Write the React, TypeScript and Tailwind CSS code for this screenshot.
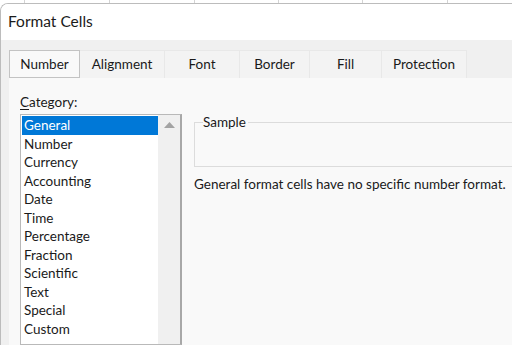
const tabs = [
  { label: "Number", w: "w-[71px]", active: true },
  { label: "Alignment", w: "w-[85px]" },
  { label: "Font", w: "w-[75px]" },
  { label: "Border", w: "w-[70px]" },
  { label: "Fill", w: "w-[72px]" },
  { label: "Protection", w: "w-[85px]" },
];

const categories = [
  "General",
  "Number",
  "Currency",
  "Accounting",
  "Date",
  "Time",
  "Percentage",
  "Fraction",
  "Scientific",
  "Text",
  "Special",
  "Custom",
];

export default function App() {
  return (
    <div
      className="w-[512px] h-[345px] overflow-hidden bg-white flex flex-col text-[#1a1a1a]"
      style={{ fontFamily: '"Segoe UI", Lato, sans-serif' }}
    >
      {/* sheet grid peeking above the dialog */}
      <div className="h-[3px] flex shrink-0">
        <div className="w-[25px] border-r border-[#d4d4d4]" />
        <div className="w-[85px] border-r border-[#d4d4d4]" />
        <div className="w-[85px] border-r border-[#d4d4d4]" />
        <div className="w-[84px] border-r border-[#d4d4d4]" />
        <div className="w-[84px] border-r border-[#d4d4d4]" />
        <div className="w-[85px] border-r border-[#d4d4d4]" />
      </div>

      <div className="flex-1 flex flex-col border-t border-l border-[#bcbcbc] rounded-tl-[8px] overflow-hidden">
        <div className="h-[36px] shrink-0 bg-white flex items-center pl-[7px] text-[15.5px] text-[#1b1b1b]">
          Format Cells
        </div>

        <div className="flex-1 bg-[#f0f0f0] pt-[10px] pl-[8px] flex flex-col">
          <div className="flex h-[28px] shrink-0">
            {tabs.map((t) =>
              t.active ? (
                <div
                  key={t.label}
                  className={`${t.w} border border-[#c3c3c3] bg-[#f9f9f9] flex items-center justify-center text-[13.5px]`}
                >
                  {t.label}
                </div>
              ) : (
                <div
                  key={t.label}
                  className={`${t.w} border-r border-t border-[#e8e8e8] bg-[#f3f3f3] flex items-center justify-center text-[13.5px]`}
                >
                  {t.label}
                </div>
              )
            )}
          </div>

          <div className="flex-1 bg-[#f9f9f9] flex pl-[11px] pt-[15px]">
            <div className="w-[162px] flex flex-col shrink-0">
              <div className="text-[13.5px] leading-[18px] h-[21px]">
                <span className="underline underline-offset-2">C</span>ategory:
              </div>
              <div className="flex-1 flex border border-[#b9b9b9] border-r-2 border-r-[#a8a8a8] bg-white">
                <div className="flex-1 pt-[1px] pl-[1px]">
                  {categories.map((c, i) => (
                    <div
                      key={c}
                      className={`h-[18.5px] leading-[18px] pl-[2px] text-[13.5px] ${
                        i === 0 ? "bg-[#0078d7] text-white" : ""
                      }`}
                    >
                      {c}
                    </div>
                  ))}
                </div>
                <div className="w-[22px] bg-[#f0f0f0] flex justify-center pt-[7px]">
                  <svg width="11" height="6" viewBox="0 0 11 6">
                    <path d="M5.5 0 L11 6 L0 6 Z" fill="#a3a3a3" />
                  </svg>
                </div>
              </div>
            </div>

            <div className="flex-1 pl-[12px] pt-[29px] flex flex-col">
              <div className="h-[45px] border border-[#dcdcdc] border-r-0 relative">
                <span className="absolute -top-[11px] left-[8px] bg-[#f9f9f9] pr-[2px] text-[13.5px]">
                  Sample
                </span>
              </div>
              <div className="mt-[8px] text-[13.5px] leading-[18px] whitespace-nowrap">
                General format cells have no specific number format.
              </div>
            </div>
          </div>
        </div>
      </div>
    </div>
  );
}
